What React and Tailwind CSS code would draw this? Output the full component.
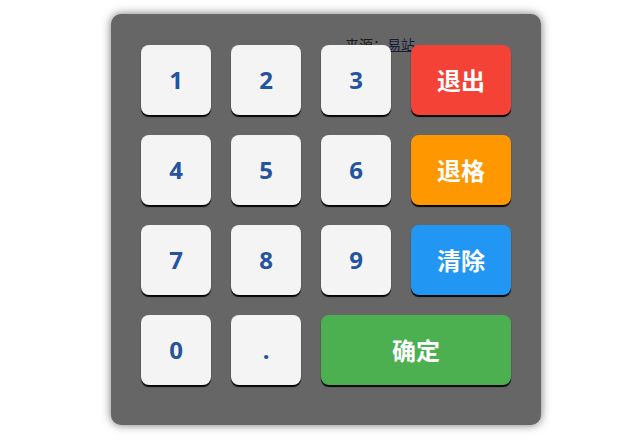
export default function App() {
  const font = { fontFamily: '"Noto Sans", "Noto Sans CJK SC", sans-serif' };
  const num =
    "relative z-10 flex items-center justify-center rounded-[8px] bg-[#f4f4f4] text-[24px] font-bold text-[#2453a0] shadow-[0_2px_1px_rgba(0,0,0,0.95)]";
  const act =
    "relative z-10 flex items-center justify-center rounded-[8px] pt-[2px] text-[24px] font-bold text-white shadow-[0_2px_1px_rgba(0,0,0,0.95)]";
  return (
    <div className="w-[619px] h-[442px] bg-white overflow-hidden" style={font}>
      <div className="relative ml-[111px] mt-[14px] w-[430px] rounded-[10px] bg-[#666666] pt-[31px] px-[30px] pb-[40px] shadow-[0_0_10px_rgba(0,0,0,0.55)]">
        <div className="absolute left-[234px] top-[22px] text-[14px] leading-[18px] text-[#1a1a1a]">
          来源：<span className="underline text-[#1a1a3a]">易站</span>
        </div>
        <div className="grid grid-cols-[70px_70px_70px_100px] grid-rows-[70px_70px_70px_70px] gap-5">
          <div className={num}>1</div>
          <div className={num}>2</div>
          <div className={num}>3</div>
          <div className={act + " bg-[#f44336]"}>退出</div>
          <div className={num}>4</div>
          <div className={num}>5</div>
          <div className={num}>6</div>
          <div className={act + " bg-[#ff9800]"}>退格</div>
          <div className={num}>7</div>
          <div className={num}>8</div>
          <div className={num}>9</div>
          <div className={act + " bg-[#2196f3]"}>清除</div>
          <div className={num}>0</div>
          <div className={num}>.</div>
          <div className={act + " col-span-2 bg-[#4caf50]"}>确定</div>
        </div>
      </div>
    </div>
  );
}
